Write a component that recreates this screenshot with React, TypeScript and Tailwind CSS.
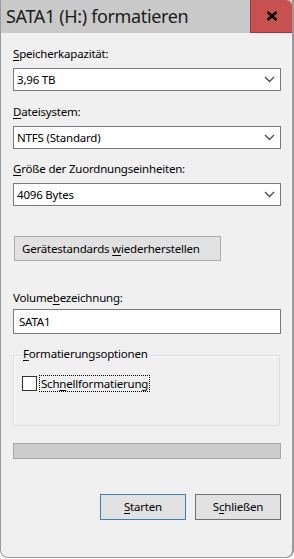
import React from 'react';

const font = { fontFamily: '"Segoe UI", "Noto Sans", sans-serif' };

const Chevron = () => (
  <svg width="11" height="7" viewBox="0 0 11 7" className="shrink-0">
    <path d="M1 1 L5.5 5.5 L10 1" fill="none" stroke="#505050" strokeWidth="1.4" />
  </svg>
);

const Key: React.FC<{ children: React.ReactNode }> = ({ children }) => (
  <span className="underline underline-offset-2 decoration-1">{children}</span>
);

const Select: React.FC<{ value: string; className?: string }> = ({ value, className = '' }) => (
  <div className={`flex items-center justify-between h-[23px] bg-white border border-[#7a7a7a] pl-[3px] pr-[5px] ${className}`}>
    <span>{value}</span>
    <Chevron />
  </div>
);

export default function App() {
  return (
    <div className="w-[294px] h-[559px] bg-white text-[11.5px] tracking-[-0.2px] leading-[16px] text-black" style={font}>
      <div className="flex flex-col h-[558px] border-l border-r-2 border-b border-[#9a9a9a] rounded-b-[8px] overflow-hidden bg-[#f0f0f0]">
        {/* Title bar */}
        <div className="flex h-[33px] bg-[#c9c9c9] shrink-0">
          <div className="flex-1 pl-[5px] pt-[5px] text-[18px] tracking-[-0.35px] leading-[22px] text-[#1b1b1b]">SATA1 (H:) formatieren</div>
          <div className="w-[42px] h-[33px] bg-[#c75050] border-l border-b border-[#8f3c3c] rounded-tr-[6px] flex items-center justify-center">
            <svg width="12" height="10" viewBox="0 0 12 10">
              <path d="M1.5 1 L10.5 9 M10.5 1 L1.5 9" stroke="#000" strokeWidth="2.4" />
            </svg>
          </div>
        </div>

        {/* Body */}
        <div className="flex flex-col px-[12px]">
          <div className="mt-[13px]"><Key>S</Key>peicherkapazität:</div>
          <Select value="3,96 TB" className="mt-[6px] w-[268px]" />

          <div className="mt-[13px]"><Key>D</Key>ateisystem:</div>
          <Select value="NTFS (Standard)" className="mt-[6px] w-[268px]" />

          <div className="mt-[12px]"><Key>G</Key>röße der Zuordnungseinheiten:</div>
          <Select value="4096 Bytes" className="mt-[6px] w-[268px]" />

          <button className="mt-[30px] self-start ml-[1px] h-[25px] w-[207px] bg-[#e1e1e1] border border-[#adadad] text-left pl-[7px]">
            Gerätestandards <Key>w</Key>iederherstellen
          </button>

          <div className="mt-[29px]">Volume<Key>b</Key>ezeichnung:</div>
          <div className="mt-[3px] h-[25px] w-[268px] bg-white border border-[#7a7a7a] pl-[5px] flex items-center">SATA1</div>

          {/* Group box */}
          <div className="relative mt-[21px] w-[267px] h-[71px] border border-[#d5dfe5] rounded-[2px] shadow-[inset_1px_1px_0_#ffffff]">
            <div className="absolute left-[8px] -top-[10px] px-[1px] bg-[#f0f0f0] leading-[16px]">
              <Key>F</Key>ormatierungsoptionen
            </div>
            <div className="flex items-center mt-[19px] ml-[8px]">
              <div className="w-[15px] h-[15px] bg-white border border-[#333333]" />
              <div className="ml-[2px] px-[1px] border border-dotted border-black leading-[15px]">
                Sch<Key>n</Key>ellformatierung
              </div>
            </div>
          </div>

          {/* Progress bar */}
          <div className="mt-[17px] w-[268px] h-[16px] bg-[#cccccc] border border-[#a8a8a8]" />

          <div className="mt-[35px] flex justify-end gap-[9px] w-[268px]">
            <button className="w-[86px] h-[26px] bg-[#e1e1e1] border border-[#3c7fb1]">
              <Key>S</Key>tarten
            </button>
            <button className="w-[86px] h-[26px] bg-[#e1e1e1] border border-[#707070]">
              S<Key>c</Key>hließen
            </button>
          </div>
        </div>
      </div>
    </div>
  );
}
